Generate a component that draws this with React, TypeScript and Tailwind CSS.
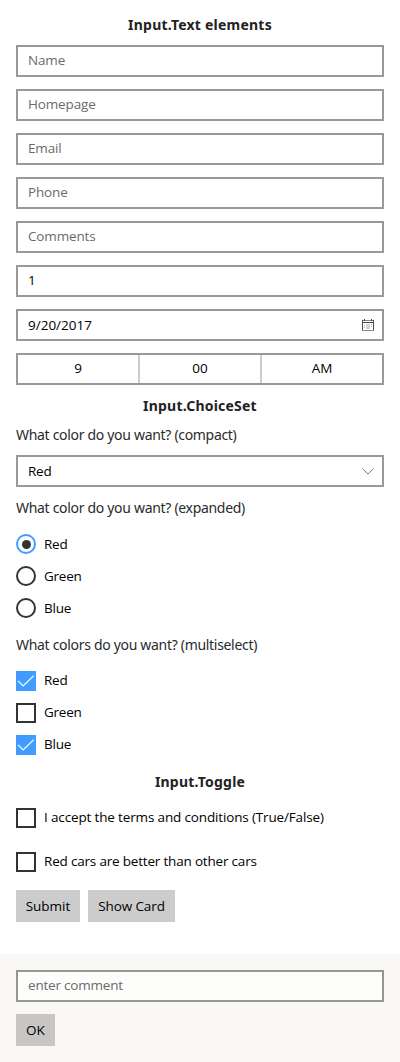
import React from "react";

const Heading = ({ children, className = "" }: { children: React.ReactNode; className?: string }) => (
  <h2 className={`h-5 text-center font-['Noto_Sans',sans-serif] text-[14px] leading-5 font-bold tracking-[0.22px] whitespace-nowrap text-[#222] ${className}`}>
    {children}
  </h2>
);

const Prompt = ({ children, className = "" }: { children: React.ReactNode; className?: string }) => (
  <p className={`h-5 font-['Noto_Sans',sans-serif] text-[14px] leading-5 tracking-[-0.31px] whitespace-nowrap text-[#2b2b2b] ${className}`}>{children}</p>
);

const Field = ({ children, className = "tracking-[-0.15px] text-[#6b6b6b]" }: { children: React.ReactNode; className?: string }) => (
  <div className={`flex h-8 items-center justify-between border-2 border-[#999] bg-white pr-2 pb-0.5 pl-2.5 ${className}`}>{children}</div>
);

const Radio = ({ label, checked = false }: { label: string; checked?: boolean }) => (
  <div className="flex h-5 items-center gap-2 tracking-[-0.25px]">
    <span className={`flex size-5 items-center justify-center rounded-full border-2 ${checked ? "border-[#429cff]" : "border-[#333]"}`}>
      {checked && <span className="size-[9px] rounded-full bg-[#333]" />}
    </span>
    <span>{label}</span>
  </div>
);

const Check = ({ label, checked = false, className = "tracking-[-0.25px]" }: { label: string; checked?: boolean; className?: string }) => (
  <div className="flex h-5 items-center gap-2">
    {checked ? (
      <span className="size-5 bg-[#429cff]">
        <svg viewBox="0 0 20 20" className="size-5" fill="none" stroke="white" strokeWidth="1.2">
          <path d="M2 9.8 7.2 15 17.8 4.6" />
        </svg>
      </span>
    ) : (
      <span className="size-5 border-2 border-[#333] bg-white" />
    )}
    <span className={`relative -top-px whitespace-nowrap ${className}`}>{label}</span>
  </div>
);

const Calendar = () => (
  <svg viewBox="0 0 12 12" className="relative top-px size-3" fill="none" shapeRendering="crispEdges">
    <path d="M.5 1.5h11v9.5H.5z" stroke="#888" />
    <path d="M.5 1v10M11.5 1v10" stroke="#555" />
    <path d="M0 3.5h12" stroke="#444" />
    <path d="M2.5 0v2M9.5 0v2" stroke="#444" />
    <path d="M2.5 6v4M9.5 5v4" stroke="#aaa" strokeDasharray="1 1" />
    <path d="M4.5 5v5M5.5 5v5M6.5 5v5M7.5 5v5" stroke="#d4d4d4" />
  </svg>
);

export default function App() {
  return (
    <main className="h-[1062px] w-[400px] bg-white font-['Open_Sans','Noto_Sans',sans-serif] text-[13.5px] leading-5 text-black">
      <div className="h-[954px] px-4 pt-[15px]">
        <Heading>Input.Text elements</Heading>
        <div className="mt-2.5 flex flex-col gap-3">
          <Field>Name</Field>
          <Field>Homepage</Field>
          <Field>Email</Field>
          <Field>Phone</Field>
          <Field>Comments</Field>
          <Field className="text-black">1</Field>
          <Field className="text-black">
            <span className="relative top-px">9/20/2017</span>
            <Calendar />
          </Field>
          <div className="grid h-8 grid-cols-[122px_122px_1fr] border-2 border-[#999] text-center leading-[26px]">
            <span className="border-r-2 border-[#ccc]">9</span>
            <span className="border-r-2 border-[#ccc]">00</span>
            <span>AM</span>
          </div>
        </div>
        <Heading className="mt-[11px]">Input.ChoiceSet</Heading>
        <Prompt className="mt-[9px]">What color do you want? (compact)</Prompt>
        <div className="mt-2.5 flex h-8 items-center justify-between border-2 border-[#999] pr-2 pl-2.5">
          <span className="tracking-[-0.25px]">Red</span>
          <svg viewBox="0 0 12 7" className="h-[7px] w-3" fill="none" stroke="#777" strokeWidth="1">
            <path d="M.4.5 6 6.1 11.6.5" />
          </svg>
        </div>
        <Prompt className="mt-[11px]">What color do you want? (expanded)</Prompt>
        <div className="mt-4 flex flex-col gap-3">
          <Radio label="Red" checked />
          <Radio label="Green" />
          <Radio label="Blue" />
        </div>
        <Prompt className="mt-[17px]">What colors do you want? (multiselect)</Prompt>
        <div className="mt-4 flex flex-col gap-3">
          <Check label="Red" checked />
          <Check label="Green" />
          <Check label="Blue" checked />
        </div>
        <Heading className="mt-[17px]">Input.Toggle</Heading>
        <div className="mt-4 flex flex-col gap-6">
          <Check label="I accept the terms and conditions (True/False)" className="tracking-[-0.15px]" />
          <Check label="Red cars are better than other cars" className="tracking-[-0.19px]" />
        </div>
        <div className="mt-[18px] flex gap-2 leading-8">
          <button className="h-8 w-16 bg-[#ccc]">Submit</button>
          <button className="h-8 w-[87px] bg-[#ccc] tracking-[-0.1px]">Show Card</button>
        </div>
      </div>
      <div className="h-[108px] bg-[#f9f8f7] px-4 pt-4">
        <div className="flex h-8 items-center border-2 border-[#969693] bg-[#fdfdfb] pb-0.5 pl-2.5 tracking-[-0.2px] text-[#6b6b6b]">enter comment</div>
        <button className="mt-3 h-8 w-[39px] bg-[#c7c6c5]">OK</button>
      </div>
    </main>
  );
}
